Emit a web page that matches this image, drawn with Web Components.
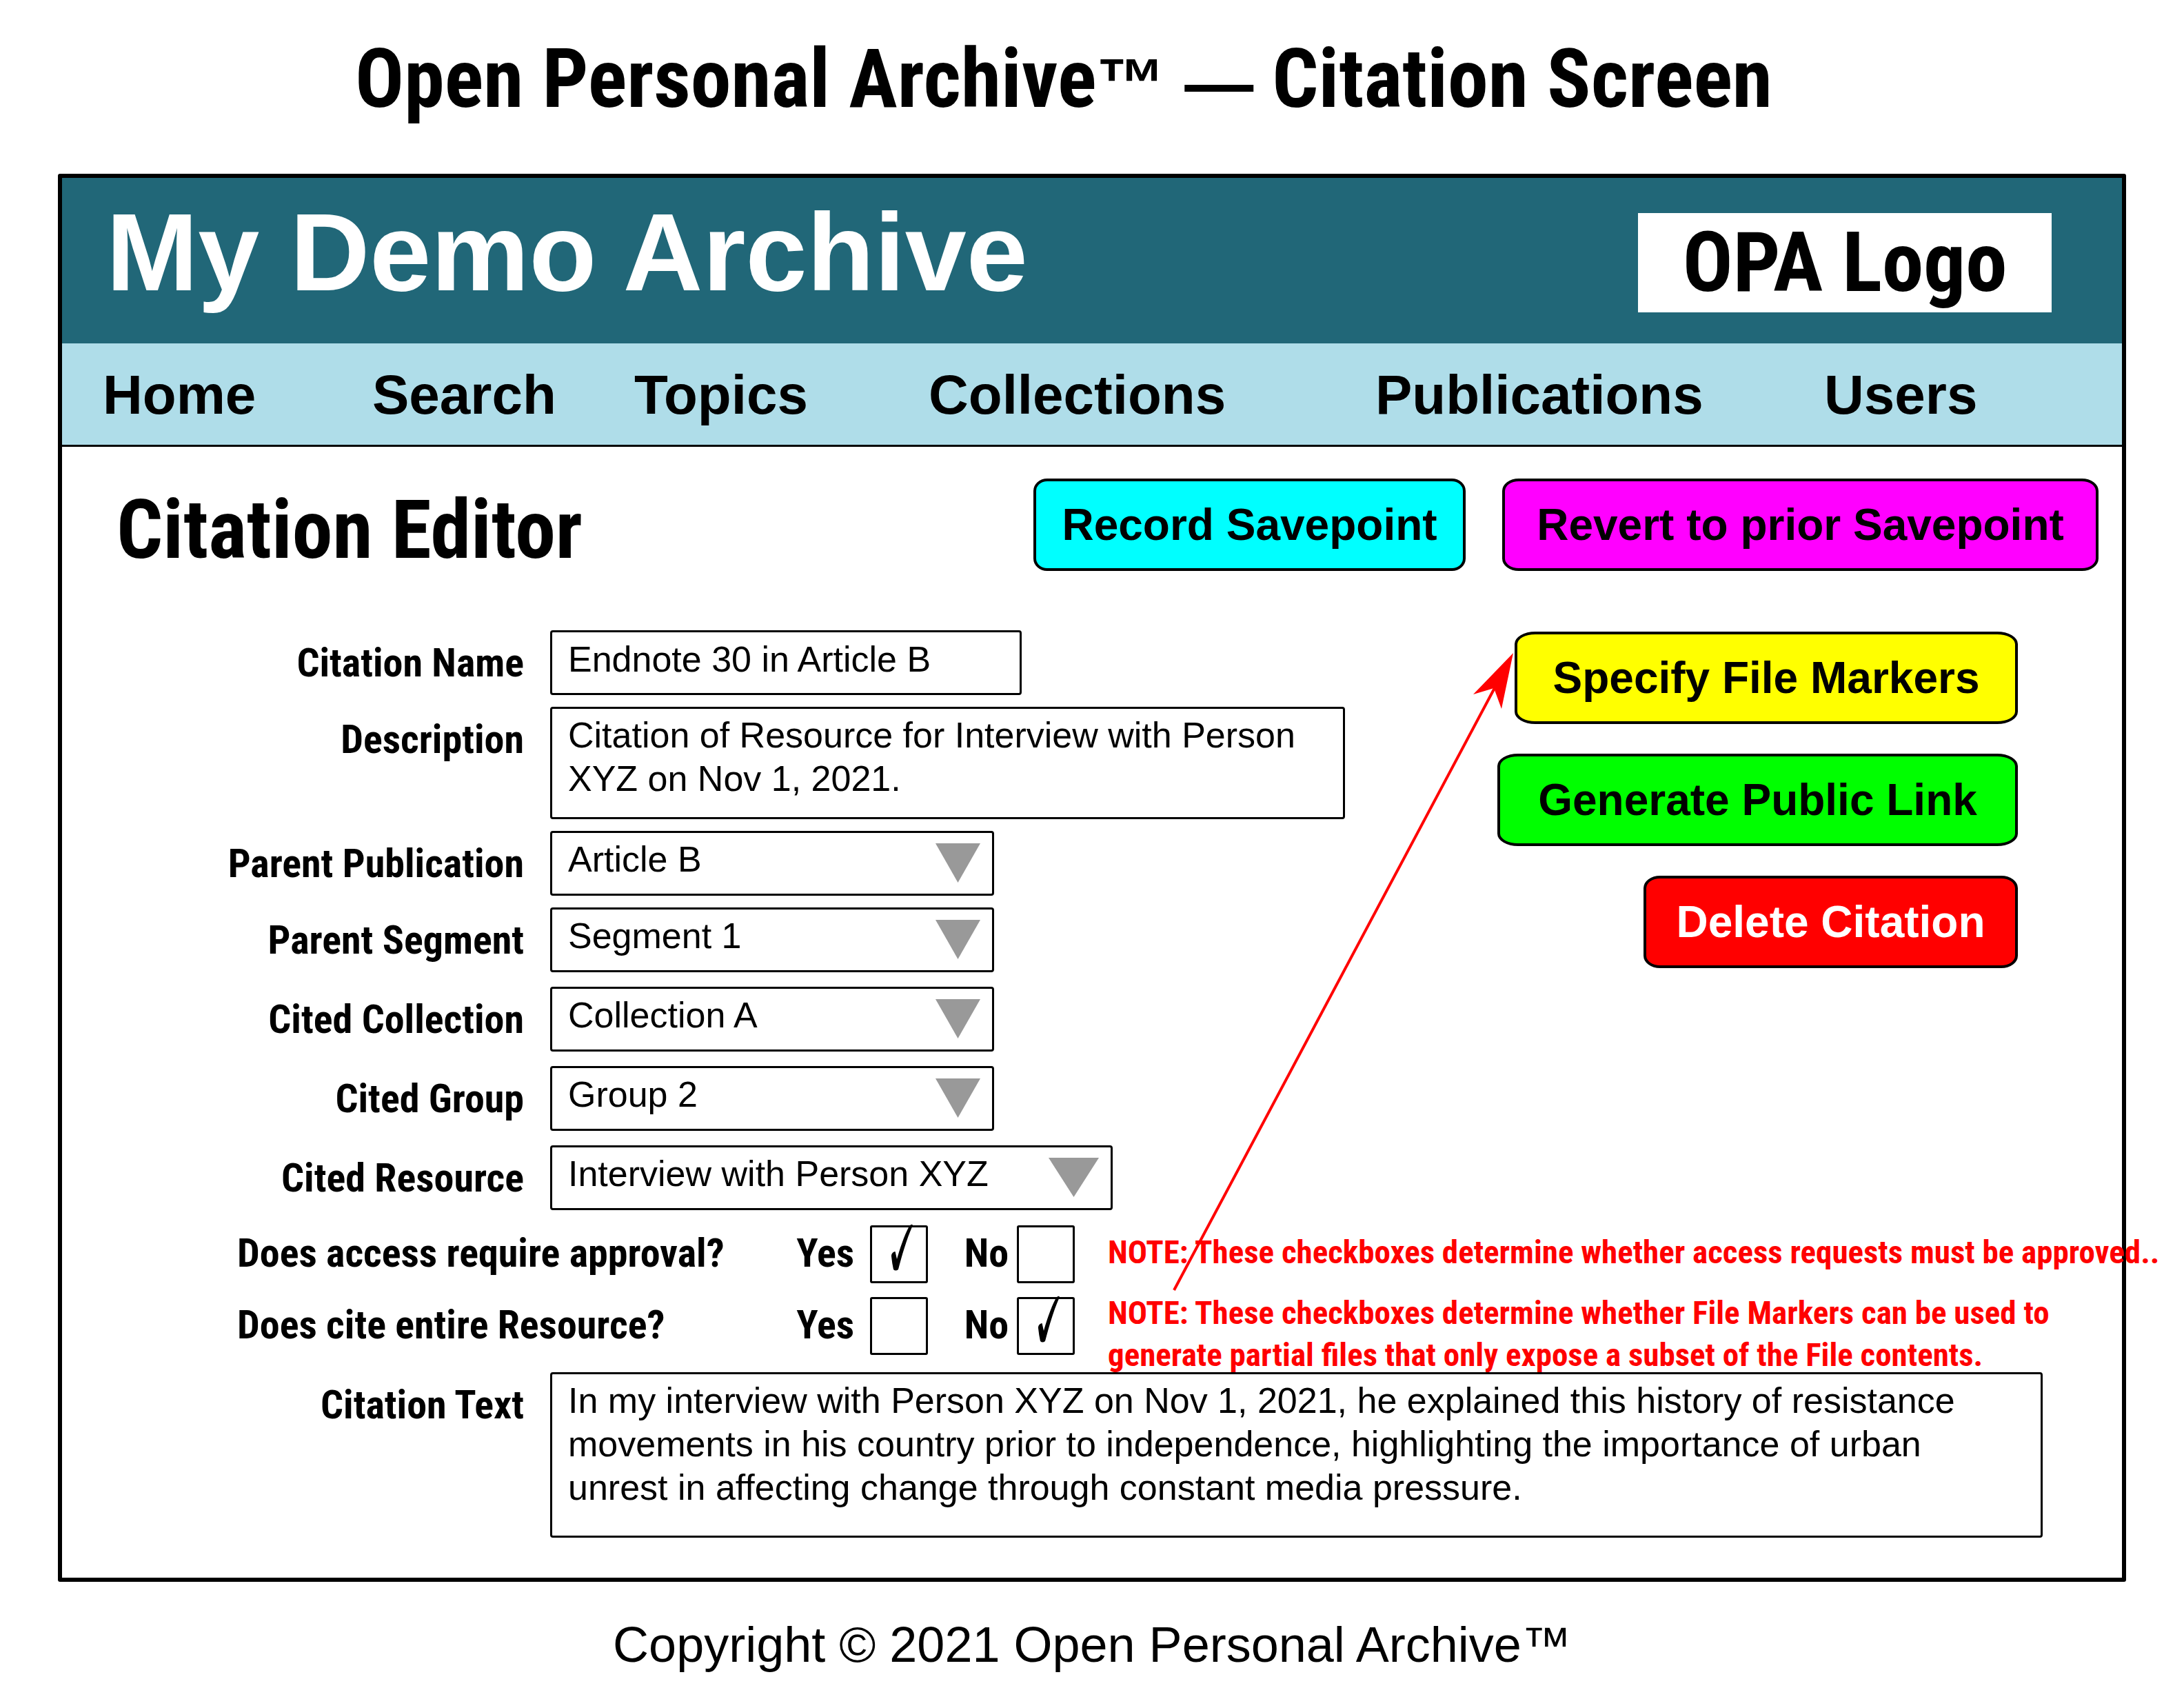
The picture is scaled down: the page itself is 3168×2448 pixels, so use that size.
<!DOCTYPE html>
<html lang="en">
<head>
<meta charset="utf-8">
<title>Open Personal Archive — Citation Screen</title>
<style>
  body { margin: 0; background: #fff; color: #000; font-family: "Liberation Sans", Arial, sans-serif; }
</style>
</head>
<body>
<opa-page></opa-page>

<script>
const NARROW = '"Liberation Sans Narrow", "Roboto Condensed", "Liberation Sans", sans-serif';

function define(name, html, setup) {
  const template = document.createElement('template');
  template.innerHTML = html;
  customElements.define(name, class extends HTMLElement {
    connectedCallback() {
      if (this.shadowRoot) return;
      const root = this.attachShadow({ mode: 'open' });
      root.append(template.content.cloneNode(true));
      if (setup) setup(this, root);
    }
  });
}

/* Coloured action button */
define('opa-button', `
  <style>
    :host { display: block; }
    button {
      display: block; box-sizing: border-box; width: 100%; height: 134px; padding: 0;
      border: 4px solid #000; border-radius: var(--rx, 24px) / 18px;
      background: var(--fill); color: var(--ink, #000);
      font: bold 64px/72px "Liberation Sans", Arial, sans-serif; white-space: nowrap; cursor: pointer;
    }
  </style>
  <button type="button"><slot></slot></button>`);

/* Label plus text box, text area or drop-down */
define('opa-field', `
  <style>
    :host { display: flex; align-items: flex-start; }
    label {
      flex: none; box-sizing: border-box; width: 670px; height: 94px; text-align: right;
      font: bold 58px/94px ${NARROW}; white-space: nowrap;
    }
    .box { position: relative; flex: 0 1 var(--w, 644px); margin-left: 38px; }
    :host([fill]) .box { flex: 1; }
    input, textarea, select {
      display: block; box-sizing: border-box; width: 100%; height: var(--h, 94px); margin: 0;
      padding: 7px 23px 18px; border: 3px solid #000; border-radius: 4px;
      background: #fff; color: #000; opacity: 1; outline: none;
      font: 52px/63px "Liberation Sans", Arial, sans-serif;
      appearance: none; resize: none; overflow: hidden;
    }
    select { padding-right: 100px; }
    svg { position: absolute; top: 18px; right: 20px; width: var(--tri, 65px); height: 57px; pointer-events: none; fill: #999; }
  </style>
  <label for="control"></label>
  <div class="box"></div>`,
  (host, root) => {
    const kind = host.getAttribute('kind') || 'input';
    const value = host.getAttribute('value');
    const box = root.querySelector('.box');
    root.querySelector('label').textContent = host.getAttribute('label');
    const control = document.createElement(kind);
    control.id = 'control';
    if (kind === 'select') control.append(new Option(value, value, true, true));
    else control.value = value;
    if (kind === 'textarea') control.spellcheck = false;
    box.append(control);
    if (kind === 'select') {
      box.insertAdjacentHTML('beforeend',
        '<svg viewBox="0 0 64 57" preserveAspectRatio="none" aria-hidden="true"><path d="M0 0H64L32 57Z"/></svg>');
    }
  });

/* Tick box with its label in front */
define('opa-check', `
  <style>
    :host { display: flex; align-items: flex-start; justify-content: flex-end; height: 84px; }
    label { font: bold 58px/80px ${NARROW}; }
    .box { position: relative; flex: none; width: 84px; height: 84px; margin-left: var(--gap, 23px); }
    input { appearance: none; display: block; box-sizing: border-box; width: 84px; height: 84px; margin: 0;
      border: 3px solid #000; border-radius: 3px; background: #fff; }
    svg { display: none; position: absolute; left: 0; top: 0; width: 84px; height: 84px; pointer-events: none; overflow: visible; }
    input:checked + svg { display: block; }
  </style>
  <label for="tick"><slot></slot></label>
  <div class="box"><input type="checkbox" id="tick"><svg viewBox="0 0 84 84" aria-hidden="true">
    <path d="M31 45C31 41 33 39 36 38Q37 38 37 40L39 49C43 35 49 16 57 1Q61 -3 62 0C53 20 46 45 41 64Q37 67 34 64Q32 55 31 45Z"/></svg></div>`,
  (host, root) => { root.querySelector('input').checked = host.hasAttribute('checked'); });

/* Question followed by its Yes and No tick boxes */
define('opa-question', `
  <style>
    :host { display: flex; align-items: flex-start; height: 84px; }
    .text { flex: none; width: 810px; font: bold 58px/80px ${NARROW}; white-space: nowrap; }
    slot[name="yes"]::slotted(*) { flex: none; width: 192px; }
    slot[name="no"]::slotted(*) { flex: none; width: 213px; --gap: 12px; }
  </style>
  <div class="text"><slot></slot></div>
  <slot name="yes"></slot><slot name="no"></slot>`);

define('opa-note', `
  <style>
    :host { display: block; color: #f00; font: bold 47px/61px ${NARROW}; white-space: nowrap; }
  </style>
  <slot></slot>`);

define('opa-header', `
  <style>
    :host { display: flex; align-items: center; justify-content: space-between; box-sizing: border-box; height: 240px; padding: 0 102px 0 64px; background: #216778; }
    h2 { margin: 0 0 24px; color: #fff; font: bold 160px/184px "Liberation Sans", Arial, sans-serif; white-space: nowrap; }
    .logo { width: 600px; margin-bottom: -6px; background: #fff; text-align: center; font: bold 121px/144px ${NARROW}; }
  </style>
  <h2>My Demo Archive</h2>
  <div class="logo">OPA Logo</div>`);

define('opa-nav', `
  <style>
    nav { display: grid; grid-template-columns: 391fr 380fr 427fr 648fr 651fr 432fr; box-sizing: border-box; height: 150px; padding-left: 59px; border-bottom: 3px solid #000; background: #afdde9; }
    a { color: #000; text-decoration: none; font: bold 80px/150px "Liberation Sans", Arial, sans-serif; white-space: nowrap; }
  </style>
  <nav><a href="#">Home</a><a href="#">Search</a><a href="#">Topics</a><a href="#">Collections</a><a href="#">Publications</a><a href="#">Users</a></nav>`);

define('opa-editor', `
  <style>
    :host { display: block; position: relative; padding: 46px 34px 58px 0; }
    .top { display: flex; align-items: flex-start; gap: 53px; padding-left: 79px; }
    h3 { flex: 1; margin: 0; font: bold 118px/150px ${NARROW}; white-space: nowrap; }
    .save { width: 627px; --fill: #0ff; --rx: 20px; }
    .revert { width: 865px; --fill: #f0f; }
    .main { display: flex; justify-content: space-between; align-items: flex-start; margin-top: 70px; }
    .fields { display: flex; flex-direction: column; gap: 17px; width: 1861px; }
    .cited { display: flex; flex-direction: column; gap: 21px; margin-top: 4px; }
    .actions { display: flex; flex-direction: column; align-items: flex-end; gap: 43px; margin: 2px 117px 0 0; }
    .markers { width: 730px; --fill: #ff0; --rx: 30px; }
    .link { width: 755px; --fill: #0f0; --rx: 30px; }
    .delete { width: 543px; --fill: #f00; --ink: #fff; }
    .checks { display: flex; gap: 48px; margin-top: 22px; padding-left: 254px; }
    .questions { display: flex; flex-direction: column; gap: 20px; }
    .notes { display: flex; flex-direction: column; gap: 27px; padding-top: 8px; }
    .citation { margin: -5px 81px 0 0; --h: 240px; }
    .arrow { position: absolute; left: 1605px; top: 290px; width: 510px; height: 940px; pointer-events: none; overflow: visible; }
  </style>
  <div class="top">
    <h3>Citation Editor</h3>
    <opa-button class="save">Record Savepoint</opa-button>
    <opa-button class="revert">Revert to prior Savepoint</opa-button>
  </div>
  <div class="main">
    <div class="fields">
      <opa-field label="Citation Name" value="Endnote 30 in Article B" style="--w:684px"></opa-field>
      <opa-field label="Description" kind="textarea" value="Citation of Resource for Interview with Person XYZ on Nov 1, 2021." style="--w:1153px;--h:163px"></opa-field>
      <opa-field label="Parent Publication" kind="select" value="Article B"></opa-field>
      <opa-field label="Parent Segment" kind="select" value="Segment 1"></opa-field>
      <div class="cited">
        <opa-field label="Cited Collection" kind="select" value="Collection A"></opa-field>
        <opa-field label="Cited Group" kind="select" value="Group 2"></opa-field>
        <opa-field label="Cited Resource" kind="select" value="Interview with Person XYZ" style="--w:816px;--tri:73px"></opa-field>
      </div>
    </div>
    <div class="actions">
      <opa-button class="markers">Specify File Markers</opa-button>
      <opa-button class="link">Generate Public Link</opa-button>
      <opa-button class="delete">Delete Citation</opa-button>
    </div>
  </div>
  <div class="checks">
    <div class="questions">
      <opa-question>Does access require approval?<opa-check slot="yes" checked>Yes</opa-check><opa-check slot="no">No</opa-check></opa-question>
      <opa-question>Does cite entire Resource?<opa-check slot="yes">Yes</opa-check><opa-check slot="no" checked>No</opa-check></opa-question>
    </div>
    <div class="notes">
      <opa-note>NOTE: These checkboxes determine whether access requests must be approved..</opa-note>
      <opa-note>NOTE: These checkboxes determine whether File Markers can be used to<br>generate partial files that only expose a subset of the File contents.</opa-note>
    </div>
  </div>
  <opa-field class="citation" fill label="Citation Text" kind="textarea" value="In my interview with Person XYZ on Nov 1, 2021, he explained this history of resistance movements in his country prior to independence, highlighting the importance of urban unrest in affecting change through constant media pressure."></opa-field>
  <svg class="arrow" viewBox="1695 938 510 940" aria-hidden="true">
    <path d="M1703 1871L2170 994" stroke="#f00" stroke-width="4" fill="none"/>
    <path d="M2195 947L2137 1007L2167 998L2178 1028Z" fill="#f00"/>
  </svg>`);

define('opa-page', `
  <style>
    :host { display: block; }
    h1 { margin: 0; padding: 43px 82px 65px 0; text-align: center; font: bold 118px/144px ${NARROW}; }
    h1 span { font: bold 100px/100px "Liberation Sans", Arial, sans-serif; }
    main { margin: 0 84px; border: 6px solid #000; border-radius: 3px; }
    footer { padding: 49px 0 20px; text-align: center; font: 72px/84px "Liberation Sans", Arial, sans-serif; }
  </style>
  <h1>Open Personal Archive<span>™ —</span> Citation Screen</h1>
  <main>
    <opa-header></opa-header>
    <opa-nav></opa-nav>
    <opa-editor></opa-editor>
  </main>
  <footer>Copyright © 2021 Open Personal Archive™</footer>`);
</script>
</body>
</html>
